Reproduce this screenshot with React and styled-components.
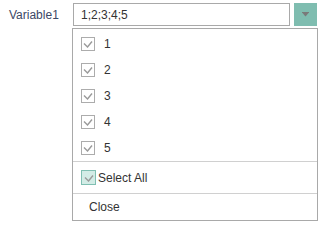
import React, { useState } from "react"
import styled, { createGlobalStyle } from "styled-components"

const GlobalStyle = createGlobalStyle`
  html, body {
    margin: 0;
    padding: 0;
    background: #fff;
    font-family: "Liberation Sans", Arial, sans-serif;
  }
`

const Page = styled.div`
  display: flex;
  flex-direction: column;
  padding: 3px 0 0 9px;
`

const Row = styled.div`
  display: flex;
  align-items: center;
`

const Label = styled.div`
  width: 64px;
  font-size: 12px;
  color: #3b4866;
`

const Field = styled.div`
  display: flex;
  align-items: center;
  gap: 4px;
`

const Input = styled.div`
  box-sizing: border-box;
  width: 217px;
  height: 23px;
  border: 1px solid #a9a9a9;
  background: #fff;
  padding-left: 7px;
  display: flex;
  align-items: center;
  font-size: 12px;
  color: #333;
`

const Toggle = styled.div`
  width: 23px;
  height: 23px;
  background: #7fbdb0;
  display: flex;
  align-items: center;
  justify-content: center;
`

const Menu = styled.div`
  box-sizing: border-box;
  width: 246px;
  margin: 2px 0 0 63px;
  border: 1px solid #a9a9a9;
  background: #fff;
  padding-top: 2px;
`

const Item = styled.div`
  display: flex;
  align-items: center;
  height: ${p => p.$h || 26}px;
  padding-left: 8px;
  gap: ${p => p.$gap || 9}px;
  font-size: 12px;
  color: #333;
  border-top: ${p => (p.$sep ? "1px solid #d0d0d0" : "none")};
`

const Box = styled.div`
  box-sizing: border-box;
  width: ${p => p.$size}px;
  height: ${p => p.$size}px;
  border: 1px solid ${p => (p.$accent ? "#80bfb2" : "#acacac")};
  background: ${p => (p.$accent ? "#d3ece6" : "#fff")};
  display: flex;
  align-items: center;
  justify-content: center;
`

const CloseItem = styled(Item)`
  padding-left: 16px;
`

function Check({ size = 14, accent }) {
  return <Box $size={size} $accent={accent}>
    <svg width="10" height="8" viewBox="0 0 10 8">
      <polyline points="1,3.5 4.5,7 9,1.5" fill="none" stroke="#9a9a9a" strokeWidth="1.4" />
    </svg>
  </Box>
}

const values = ["1", "2", "3", "4", "5"]

export default function App() {
  const [open] = useState(true)

  return <Page>
    <GlobalStyle />
    <Row>
      <Label>Variable1</Label>
      <Field>
        <Input>{values.join(";")}</Input>
        <Toggle>
          <svg width="7" height="5" viewBox="0 0 7 5">
            <rect x="0" y="0" width="7" height="1" fill="#7a7a7a" />
            <polygon points="0.5,1 6.5,1 3.5,4.5" fill="#7a7a7a" />
          </svg>
        </Toggle>
      </Field>
    </Row>
    {open && <Menu>
      {values.map(v => <Item key={v}>
        <Check />
        <span>{v}</span>
      </Item>)}
      <Item $sep $h={31} $gap={2}>
        <Check size={15} accent />
        <span>Select All</span>
      </Item>
      <CloseItem $sep $h={26}>Close</CloseItem>
    </Menu>}
  </Page>
}
